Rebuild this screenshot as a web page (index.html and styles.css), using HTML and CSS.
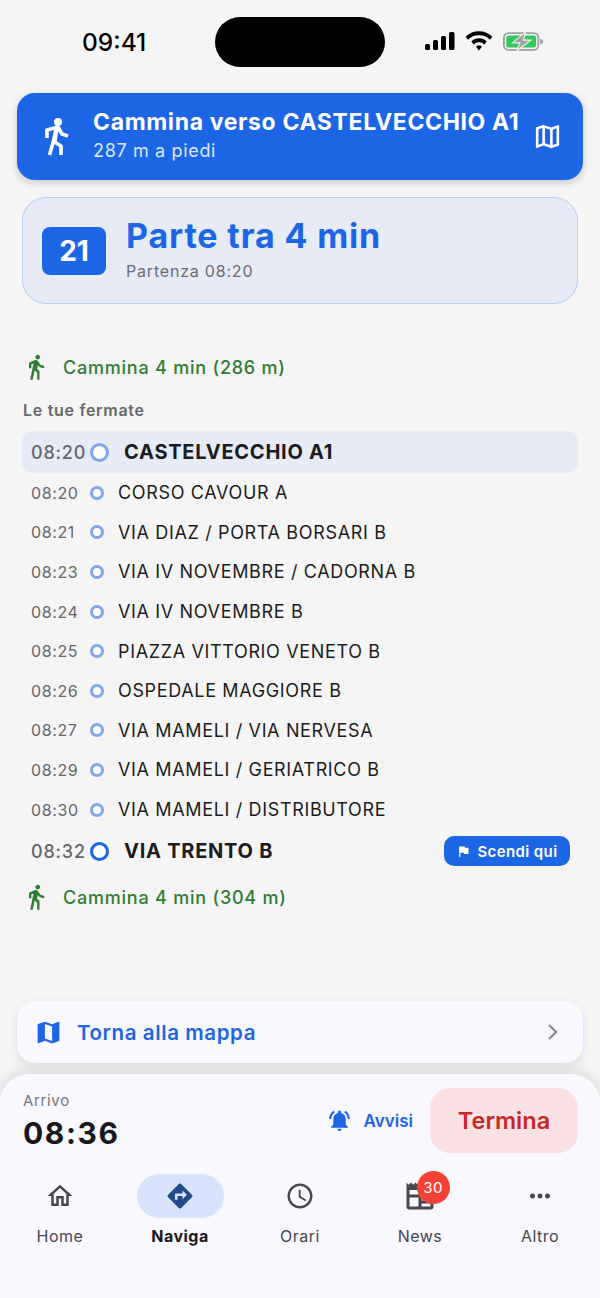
FILE: index.html
```html
<!DOCTYPE html>
<html lang="it">
<head>
  <meta charset="UTF-8">
  <meta name="viewport" content="width=device-width, initial-scale=1.0">
  <title>Naviga</title>
  <link rel="stylesheet" href="styles.css">
</head>
<body>
  <div class="status">
    <span class="clock">09:41</span>
    <div class="island"></div>
    <div class="status-icons">
      <svg class="ic-signal" viewBox="0 0 30 18"><rect x="0" y="12" width="5" height="6" rx="1.5"/><rect x="8" y="8" width="5" height="10" rx="1.5"/><rect x="16" y="4" width="5" height="14" rx="1.5"/><rect x="24" y="0" width="5.5" height="18" rx="1.5"/></svg>
      <svg class="ic-wifi" viewBox="0 0 26 19"><path d="M13 13.800a3 3 0 0 1 2.700 1.600L13 18.800l-2.700-3.400a3 3 0 0 1 2.700-1.600zM13 7.500c2.800 0 5.300 1.100 7.100 3l-2.200 2.700A6.200 6.200 0 0 0 13 11.200a6.200 6.200 0 0 0-4.900 2L5.900 10.500A9.800 9.800 0 0 1 13 7.500zM13 1c4.800 0 9.200 1.900 12.400 5l-2.200 2.700A14.300 14.300 0 0 0 13 4.700 14.300 14.300 0 0 0 2.800 8.700L.6 6A17.800 17.800 0 0 1 13 1z"/></svg>
      <svg class="ic-batt" viewBox="0 0 44 20">
        <rect class="b-edge" x="1" y="1" width="37" height="18" rx="5"/>
        <rect class="b-fill" x="3.500" y="3.500" width="32" height="13" rx="2.500"/>
        <path class="b-tip" d="M40 7c2 .4 3 1.500 3 3s-1 2.600-3 3z"/>
        <path class="b-bolt" d="M24 0 10 11.500h8L15 20 30 8.500h-8z"/>
      </svg>
    </div>
  </div>

  <div class="banner">
    <svg class="ic-walker" viewBox="0 0 24 38">
      <circle cx="13" cy="4" r="4"/>
      <path d="M2 20v-8l11-3 4 7 6 2M11.500 9l-3 14-4 14M8 23l8 5v9M12 9l-2 14"/>
    </svg>
    <div class="banner-text">
      <div class="banner-title">Cammina verso CASTELVECCHIO A1</div>
      <div class="banner-sub">287 m a piedi</div>
    </div>
    <svg class="ic-map-line" viewBox="0 0 24 24"><path d="M20.500 3l-.16.03L15 5.100 9 3 3.360 4.900c-.21.07-.36.25-.36.48V20.500c0 .28.22.5.5.5l.16-.03L9 18.900l6 2.100 5.640-1.900c.21-.07.36-.25.36-.48V3.500c0-.28-.22-.5-.5-.5zM10 5.470l4 1.400v11.660l-4-1.400V5.470zm-5 .99l3-1.010v11.700l-3 1.160V6.460zm14 11.080l-3 1.010V6.860l3-1.160v11.840z"/></svg>
  </div>

  <div class="depart">
    <div class="line-badge">21</div>
    <div>
      <div class="depart-title">Parte tra 4 min</div>
      <div class="depart-sub">Partenza 08:20</div>
    </div>
  </div>

  <div class="walk walk-first">
    <svg class="ic-walk" viewBox="0 0 24 24"><path d="M13.500 5.500c1.100 0 2-.9 2-2s-.9-2-2-2-2 .9-2 2 .9 2 2 2zM9.800 8.900L7 23h2.100l1.800-8 2.100 2v6h2v-7.500l-2.100-2 .6-3C14.800 12 16.800 13 19 13v-2c-1.900 0-3.500-1-4.300-2.400l-1-1.600c-.4-.6-1-1-1.700-1-.3 0-.5.1-.8.1L6 8.300V13h2V9.600l1.800-.7"/></svg>
    <span>Cammina 4 min (286 m)</span>
  </div>

  <div class="section-title">Le tue fermate</div>

  <div class="stops">
    <div class="stop stop-first"><span class="time">08:20</span><span class="dot"></span><span class="name">CASTELVECCHIO A1</span></div>
    <div class="stop"><span class="time">08:20</span><span class="dot"></span><span class="name">CORSO CAVOUR A</span></div>
    <div class="stop"><span class="time">08:21</span><span class="dot"></span><span class="name">VIA DIAZ / PORTA BORSARI B</span></div>
    <div class="stop"><span class="time">08:23</span><span class="dot"></span><span class="name">VIA IV NOVEMBRE / CADORNA B</span></div>
    <div class="stop"><span class="time">08:24</span><span class="dot"></span><span class="name">VIA IV NOVEMBRE B</span></div>
    <div class="stop"><span class="time">08:25</span><span class="dot"></span><span class="name">PIAZZA VITTORIO VENETO B</span></div>
    <div class="stop"><span class="time">08:26</span><span class="dot"></span><span class="name">OSPEDALE MAGGIORE B</span></div>
    <div class="stop"><span class="time">08:27</span><span class="dot"></span><span class="name">VIA MAMELI / VIA NERVESA</span></div>
    <div class="stop"><span class="time">08:29</span><span class="dot"></span><span class="name">VIA MAMELI / GERIATRICO B</span></div>
    <div class="stop"><span class="time">08:30</span><span class="dot"></span><span class="name">VIA MAMELI / DISTRIBUTORE</span></div>
    <div class="stop stop-last">
      <span class="time">08:32</span><span class="dot"></span><span class="name">VIA TRENTO B</span>
      <span class="alight">
        <svg class="ic-flag" viewBox="0 0 24 24"><path d="M14.400 6L14 4H5v17h2v-7h5.600l.4 2h7V6z"/></svg>
        Scendi qui
      </span>
    </div>
  </div>

  <div class="walk">
    <svg class="ic-walk" viewBox="0 0 24 24"><path d="M13.500 5.500c1.100 0 2-.9 2-2s-.9-2-2-2-2 .9-2 2 .9 2 2 2zM9.800 8.900L7 23h2.100l1.800-8 2.100 2v6h2v-7.500l-2.100-2 .6-3C14.800 12 16.800 13 19 13v-2c-1.900 0-3.500-1-4.300-2.400l-1-1.600c-.4-.6-1-1-1.700-1-.3 0-.5.1-.8.1L6 8.300V13h2V9.600l1.800-.7"/></svg>
    <span>Cammina 4 min (304 m)</span>
  </div>

  <div class="back-card">
    <svg class="ic-map" viewBox="0 0 24 24"><path d="M20.500 3l-.16.03L15 5.100 9 3 3.360 4.900c-.21.07-.36.25-.36.48V20.500c0 .28.22.5.5.5l.16-.03L9 18.900l6 2.100 5.640-1.900c.21-.07.36-.25.36-.48V3.500c0-.28-.22-.5-.5-.5zM15 19l-6-2.110V5l6 2.110V19z"/></svg>
    <span class="back-text">Torna alla mappa</span>
    <svg class="ic-chevron" viewBox="0 0 12 18"><path d="M2 2l7 7-7 7"/></svg>
  </div>

  <div class="sheet">
    <div class="sheet-top">
      <div class="arrival">
        <div class="arrival-label">Arrivo</div>
        <div class="arrival-time">08:36</div>
      </div>
      <div class="alerts">
        <svg class="ic-bell" viewBox="0 0 24 24"><path d="M7.580 4.080L6.150 2.650C3.750 4.480 2.170 7.300 2.030 10.500h2c.15-2.650 1.510-4.970 3.550-6.420zm12.390 6.420h2c-.15-3.200-1.730-6.020-4.120-7.850l-1.420 1.430c2.020 1.450 3.390 3.770 3.540 6.420zM18 11c0-3.070-1.640-5.640-4.500-6.320V4c0-.83-.67-1.500-1.500-1.500s-1.500.67-1.500 1.500v.68C7.630 5.360 6 7.920 6 11v5l-2 2v1h16v-1l-2-2v-5zm-6 11c.14 0 .27-.01.4-.04.65-.14 1.180-.58 1.440-1.180.1-.24.15-.5.15-.78h-4c.01 1.100.9 2 2.010 2z"/></svg>
        <span>Avvisi</span>
      </div>
      <div class="end-btn">Termina</div>
    </div>
    <div class="tabs">
      <div class="tab">
        <div class="tab-icon"><svg class="ic-tab" viewBox="0 0 24 24"><path d="M12 5.690l5 4.500V18h-2v-6H9v6H7v-7.810l5-4.500M12 3L2 12h3v8h6v-6h2v6h6v-8h3L12 3z"/></svg></div>
        <span>Home</span>
      </div>
      <div class="tab tab-on">
        <div class="tab-icon"><svg class="ic-tab" viewBox="0 0 24 24"><path d="M21.710 11.290l-9-9c-.39-.39-1.020-.39-1.410 0l-9 9c-.39.39-.39 1.020 0 1.410l9 9c.39.39 1.020.39 1.410 0l9-9c.39-.38.39-1.010 0-1.410zM14 14.500V12h-4v3H8v-4c0-.55.45-1 1-1h5V7.500l3.500 3.500-3.500 3.500z"/></svg></div>
        <span>Naviga</span>
      </div>
      <div class="tab">
        <div class="tab-icon"><svg class="ic-tab" viewBox="0 0 24 24"><path d="M11.990 2C6.470 2 2 6.480 2 12s4.470 10 9.990 10C17.520 22 22 17.520 22 12S17.520 2 11.990 2zM12 20c-4.420 0-8-3.580-8-8s3.580-8 8-8 8 3.580 8 8-3.580 8-8 8zm.5-13H11v6l5.250 3.150.75-1.230-4.500-2.670z"/></svg></div>
        <span>Orari</span>
      </div>
      <div class="tab">
        <div class="tab-icon">
          <svg class="ic-tab" viewBox="2 2 20 20"><path d="M3 3l1.500 1.500L6 3l1.500 1.500L9 3l1.500 1.500L12 3l1.500 1.500L15 3l1.500 1.500L18 3l1.500 1.500L21 3v16a2 2 0 0 1-2 2H5a2 2 0 0 1-2-2zM5 8v3h14V8zm0 5v6h6v-6zm8 0v2h6v-2zm0 4v2h6v-2z"/></svg>
          <span class="badge">30</span>
        </div>
        <span>News</span>
      </div>
      <div class="tab">
        <div class="tab-icon"><svg class="ic-tab" viewBox="0 0 24 24"><circle cx="6" cy="12" r="2"/><circle cx="12" cy="12" r="2"/><circle cx="18" cy="12" r="2"/></svg></div>
        <span>Altro</span>
      </div>
    </div>
  </div>
</body>
</html>
```

FILE: styles.css
```css
* {
  box-sizing: border-box;
}
html, body {
  margin: 0;
  padding: 0;
}
body {
  width: 600px;
  height: 1298px;
  background: #f5f5f6;
  font-family: "Inter", "Liberation Sans", sans-serif;
  color: #1c1c20;
  display: flex;
  flex-direction: column;
  overflow: hidden;
}
svg {
  display: block;
  flex: none;
  fill: currentColor;
}

/* status bar */
.status {
  height: 93px;
  flex: none;
  display: grid;
  grid-template-columns: 215px 170px 215px;
  padding-top: 17px;
}
.clock {
  font-size: 24.5px;
  font-weight: 500;
  color: #000;
  padding: 8px 0 0 82px;
  line-height: 35px;
}
.island {
  height: 50px;
  background: #000;
  border-radius: 25px;
}
.status-icons {
  display: flex;
  align-items: flex-start;
  gap: 10px;
  padding: 15px 0 0 40px;
}
.ic-signal {
  width: 30px;
  height: 18px;
  color: #000;
}
.ic-wifi {
  width: 28px;
  height: 21px;
  color: #000;
  margin-top: -2px;
}
.ic-batt {
  width: 41px;
  height: 19px;
}
.b-edge {
  fill: none;
  stroke: #a0a0a0;
  stroke-width: 2;
}
.b-fill {
  fill: #34c759;
}
.b-tip {
  fill: #9a9a9a;
}
.b-bolt {
  fill: #a0a0a0;
  stroke: #eef5ee;
  stroke-width: 1.2;
}

/* walking banner */
.banner {
  height: 87px;
  flex: none;
  margin: 0 17px;
  padding: 0 20px 0 28px;
  background: #1c66e6;
  border-radius: 18px;
  box-shadow: 0 3px 9px rgba(0, 0, 0, .18);
  display: flex;
  align-items: center;
  color: #fff;
}
.ic-walker {
  width: 24px;
  height: 38px;
  fill: #fff;
}
.ic-walker path {
  fill: none;
  stroke: #fff;
  stroke-width: 3.6;
  stroke-linejoin: round;
}
.banner-text {
  flex: 1;
  padding-left: 24px;
  margin-top: -2px;
}
.banner-title {
  font-size: 23px;
  font-weight: 700;
  line-height: 30px;
  letter-spacing: .63px;
  white-space: nowrap;
}
.banner-sub {
  font-size: 18px;
  line-height: 26px;
  color: #dbe6fb;
  letter-spacing: .65px;
  margin-top: 1px;
}
.ic-map-line {
  width: 31px;
  height: 31px;
}

/* departure card */
.depart {
  height: 107px;
  flex: none;
  margin: 17px 22px 0;
  padding: 0 19px;
  background: #e6ebf5;
  border: 1.5px solid #b8cdf3;
  border-radius: 24px;
  display: flex;
  align-items: center;
  gap: 20px;
}
.line-badge {
  width: 64px;
  height: 48px;
  background: #1c66e6;
  color: #fff;
  border-radius: 8px;
  font-size: 28px;
  font-weight: 700;
  text-align: center;
  line-height: 48px;
}
.depart-title {
  font-size: 34px;
  font-weight: 700;
  color: #1c66e6;
  line-height: 40px;
  letter-spacing: .85px;
  margin-top: -3px;
}
.depart-sub {
  font-size: 16px;
  line-height: 22px;
  color: #6c6c72;
  margin-top: 4px;
  letter-spacing: .8px;
}

/* walk rows */
.walk {
  display: flex;
  align-items: center;
  flex: none;
  height: 30px;
  margin: 10px 0 0 22px;
  gap: 13px;
  color: #2e7d32;
  font-size: 18px;
  font-weight: 500;
  letter-spacing: .78px;
}
.walk-first {
  margin-top: 48px;
}
.ic-walk {
  width: 28px;
  height: 28px;
}
.section-title {
  flex: none;
  margin: 17px 0 0 23px;
  font-size: 16px;
  font-weight: 600;
  line-height: 22px;
  color: #66666c;
  letter-spacing: .7px;
}

/* stops */
.stops {
  flex: none;
  margin: 10px 22px 0;
  display: flex;
  flex-direction: column;
}
.stop {
  height: 39.6px;
  padding: 0 8px 0 9px;
  display: flex;
  align-items: center;
  font-size: 18px;
  letter-spacing: .65px;
}
.time {
  width: 59px;
  font-size: 16px;
  color: #66666c;
  letter-spacing: .6px;
}
.dot {
  width: 14px;
  height: 14px;
  border: 3.5px solid #7fa8ec;
  border-radius: 50%;
  background: #fff;
  margin-right: 14px;
}
.stop-first, .stop-last {
  height: 42px;
  font-size: 20px;
  font-weight: 700;
  letter-spacing: .75px;
}
.stop-first {
  background: #e6ebf5;
  border-radius: 10px;
}
.stop-last {
  margin-top: 1px;
}
.stop-first .time, .stop-last .time {
  font-size: 18px;
  font-weight: 500;
  letter-spacing: .8px;
}
.stop-first .dot, .stop-last .dot {
  width: 19px;
  height: 19px;
  margin-right: 15px;
}
.stop-last .dot {
  border-color: #1c66e6;
}
.alight {
  margin-left: auto;
  height: 30px;
  width: 126px;
  background: #1c66e6;
  color: #fff;
  border-radius: 10px;
  font-size: 15px;
  font-weight: 600;
  letter-spacing: .4px;
  display: flex;
  align-items: center;
  justify-content: center;
  gap: 6px;
}
.ic-flag {
  width: 15px;
  height: 15px;
}

/* back to map */
.back-card {
  height: 62px;
  flex: none;
  margin: 89px 17px 0;
  padding: 0 24px 0 17px;
  background: #f9f8fe;
  border-radius: 18px;
  box-shadow: 0 3px 10px rgba(0, 0, 0, .1);
  display: flex;
  align-items: center;
  color: #1c66e6;
}
.ic-map {
  width: 29px;
  height: 29px;
}
.back-text {
  flex: 1;
  padding-left: 14px;
  font-size: 20.5px;
  font-weight: 600;
  letter-spacing: .6px;
}
.ic-chevron {
  width: 12px;
  height: 18px;
  fill: none;
  stroke: #8c8c8f;
  stroke-width: 2.2;
}

/* bottom sheet */
.sheet {
  flex: 1;
  margin-top: 11px;
  background: #f9f8fe;
  border-radius: 28px 28px 0 0;
  box-shadow: 0 -3px 12px rgba(0, 0, 0, .12);
}
.sheet-top {
  height: 100px;
  padding: 14px 22px 0 23px;
  display: flex;
  align-items: flex-start;
}
.arrival {
  flex: 1;
  padding-top: 2px;
}
.arrival-label {
  font-size: 15px;
  line-height: 22px;
  color: #77777c;
  letter-spacing: .65px;
}
.arrival-time {
  font-size: 30px;
  font-weight: 700;
  line-height: 38px;
  margin-top: 2px;
  letter-spacing: 1.6px;
  color: #18181c;
}
.alerts {
  height: 65px;
  display: flex;
  align-items: center;
  gap: 12px;
  margin-right: 17px;
  color: #1c66e6;
  font-size: 17px;
  font-weight: 600;
}
.ic-bell {
  width: 25px;
  height: 25px;
}
.end-btn {
  width: 148px;
  height: 65px;
  background: #fae1e4;
  border-radius: 20px;
  color: #c62828;
  font-size: 23.5px;
  font-weight: 600;
  text-align: center;
  line-height: 65px;
}

/* tabs */
.tabs {
  display: grid;
  grid-template-columns: repeat(5, 120px);
}
.tab {
  display: flex;
  flex-direction: column;
  align-items: center;
  font-size: 16px;
  line-height: 22px;
  letter-spacing: .5px;
  color: #47474e;
}
.tab-icon {
  position: relative;
  width: 87px;
  height: 44px;
  border-radius: 22px;
  display: flex;
  align-items: center;
  justify-content: center;
  margin-bottom: 7px;
}
.ic-tab {
  width: 30px;
  height: 30px;
}
.tab-on {
  color: #18181c;
  font-weight: 700;
}
.tab-on .tab-icon {
  background: #d8e3fb;
  color: #234a86;
}
.badge {
  position: absolute;
  top: -3px;
  left: 40px;
  width: 33px;
  height: 33px;
  border-radius: 50%;
  background: #f44336;
  color: #fff;
  font-size: 15px;
  font-weight: 400;
  line-height: 33px;
  text-align: center;
}
```
